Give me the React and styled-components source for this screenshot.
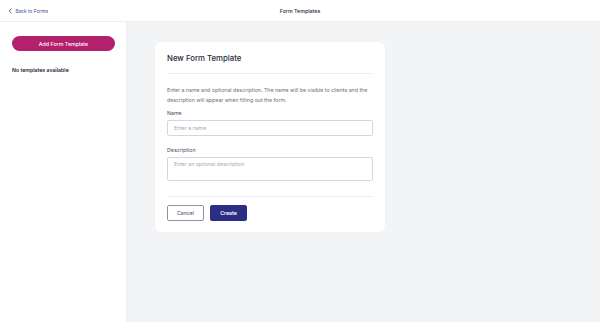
import React from "react";
import styled, { createGlobalStyle } from "styled-components";

const Global = createGlobalStyle`
  html, body { margin: 0; padding: 0; }
  body { font-family: Inter, "Noto Sans", sans-serif; background: #f3f4f6; }
  * { box-sizing: border-box; }
`;

const Page = styled.div`
  width: 600px;
  height: 322px;
  display: flex;
  flex-direction: column;
  background: #f3f4f6;
`;

const Header = styled.header`
  height: 22px;
  flex: none;
  background: #fff;
  border-bottom: 1px solid #eceef2;
  display: grid;
  grid-template-columns: 1fr auto 1fr;
  align-items: center;
  padding: 0 8px;
`;

const BackLink = styled.a`
  display: flex;
  align-items: center;
  gap: 2.5px;
  font-size: 4.8px;
  color: #3d4a94;
  text-decoration: none;
`;

const HeaderTitle = styled.div`
  font-size: 5.3px;
  color: #2a2d3d;
  font-weight: 500;
`;

const Body = styled.div`
  flex: 1;
  display: flex;
`;

const Sidebar = styled.aside`
  width: 127px;
  background: #fff;
  border-right: 1px solid #eceef2;
  padding: 14px 12px;
  display: flex;
  flex-direction: column;
`;

const AddButton = styled.button`
  height: 15px;
  width: 103px;
  border: none;
  border-radius: 8px;
  background: #b3206c;
  color: #fff;
  font-family: inherit;
  font-size: 5.3px;
  font-weight: 500;
  padding: 0;
`;

const Empty = styled.div`
  margin-top: 16px;
  font-size: 5.2px;
  font-weight: 600;
  color: #23263a;
`;

const Main = styled.main`
  flex: 1;
  padding: 20px 28px;
`;

const Card = styled.section`
  width: 230px;
  background: #fff;
  border-radius: 6px;
  padding: 11px 12px 11px;
  box-shadow: 0 0 2px rgba(0,0,0,0.03);
`;

const CardTitle = styled.h2`
  margin: 0;
  font-size: 7.8px;
  font-weight: 500;
  color: #262a40;
  padding-bottom: 10px;
  border-bottom: 1px solid #eceef2;
`;

const Intro = styled.p`
  margin: 11px 0 0;
  font-size: 5.25px;
  line-height: 10px;
  color: #6b6f80;
`;

const Label = styled.label`
  display: block;
  font-size: 5.3px;
  color: #4a4e60;
  margin-top: ${p => p.$mt}px;
  margin-bottom: 4px;
`;

const Input = styled.input`
  display: block;
  width: 100%;
  height: 16px;
  border: 1px solid #d4d7de;
  border-radius: 2px;
  padding: 0 6px;
  font-family: inherit;
  font-size: 5.2px;
  color: #333;
  &::placeholder { color: #a6aab6; }
`;

const TextArea = styled.textarea`
  display: block;
  width: 100%;
  height: 24px;
  border: 1px solid #d4d7de;
  border-radius: 2px;
  padding: 3px 6px;
  font-family: inherit;
  font-size: 5.2px;
  resize: none;
  &::placeholder { color: #a6aab6; }
`;

const Divider = styled.div`
  height: 1px;
  background: #eceef2;
  margin: 15px 0 8px;
`;

const Actions = styled.div`
  display: flex;
  gap: 6px;
`;

const Btn = styled.button`
  width: 37px;
  height: 16px;
  border-radius: 2px;
  font-family: inherit;
  font-size: 5.2px;
  padding: 0;
  border: 1px solid ${p => (p.$primary ? "#2b2e83" : "#8f92a3")};
  background: ${p => (p.$primary ? "#2b2e83" : "#fff")};
  color: ${p => (p.$primary ? "#fff" : "#4a4d60")};
  font-weight: ${p => (p.$primary ? 600 : 400)};
`;

export default function App() {
  return (
    <Page>
      <Global />
      <Header>
        <BackLink href="#">
          <svg width="5" height="6" viewBox="0 0 5 6">
            <path d="M3.5 0.5 L1.2 3 L3.5 5.5" fill="none" stroke="#3d4a94" strokeWidth="0.8" />
          </svg>
          Back to Forms
        </BackLink>
        <HeaderTitle>Form Templates</HeaderTitle>
        <div />
      </Header>
      <Body>
        <Sidebar>
          <AddButton>Add Form Template</AddButton>
          <Empty>No templates available</Empty>
        </Sidebar>
        <Main>
          <Card>
            <CardTitle>New Form Template</CardTitle>
            <Intro>
              Enter a name and optional description. The name will be visible to clients and the description will appear when filling out the form.
            </Intro>
            <Label $mt={5}>Name</Label>
            <Input placeholder="Enter a name" />
            <Label $mt={11}>Description</Label>
            <TextArea placeholder="Enter an optional description" />
            <Divider />
            <Actions>
              <Btn>Cancel</Btn>
              <Btn $primary>Create</Btn>
            </Actions>
          </Card>
        </Main>
      </Body>
    </Page>
  );
}
